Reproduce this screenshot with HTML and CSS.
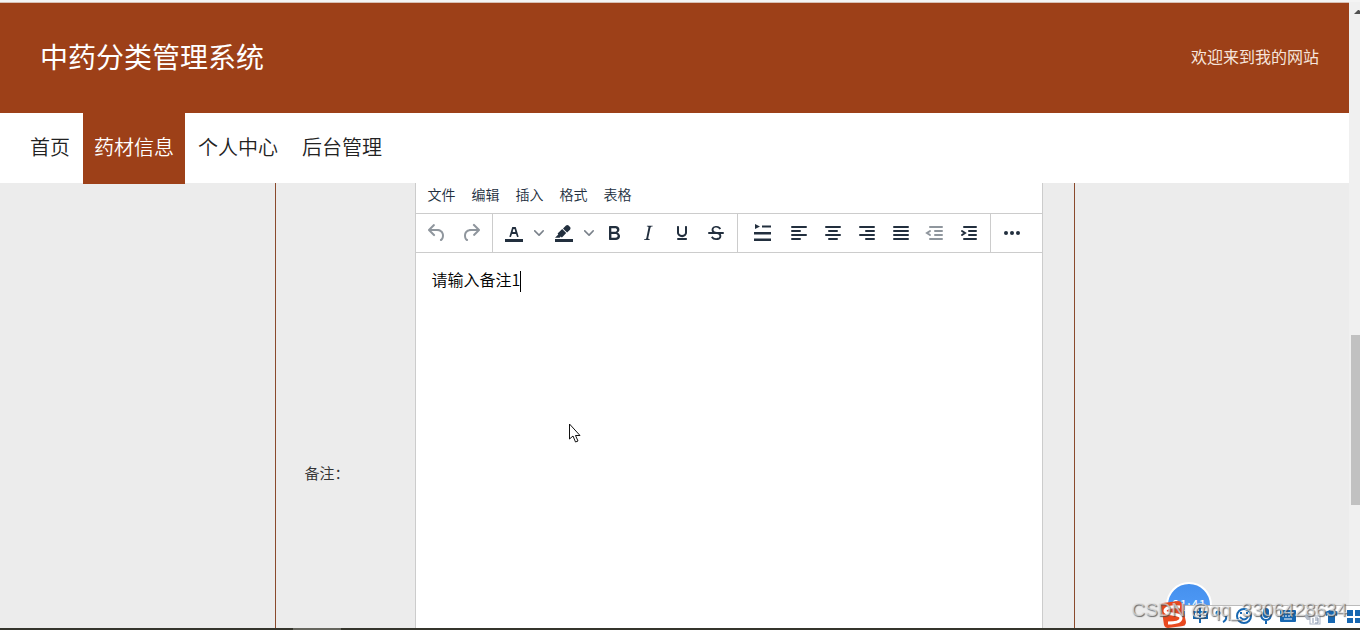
FILE: index.html
```html
<!DOCTYPE html>
<html lang="zh-CN">
<head>
<meta charset="utf-8">
<title>中药分类管理系统</title>
<link rel="stylesheet" href="styles.css">
</head>
<body>
<div class="screen">
  <div class="page">
    <header class="header">
      <h1 class="title">中药分类管理系统</h1>
      <span class="welcome">欢迎来到我的网站</span>
    </header>
    <nav class="nav">
      <a class="nav-link" href="#">首页</a>
      <a class="nav-link active" href="#">药材信息</a>
      <a class="nav-link" href="#">个人中心</a>
      <a class="nav-link" href="#">后台管理</a>
    </nav>
    <main class="content">
      <form class="form">
        <div class="form-row">
          <label class="form-label" for="remark">备注：</label>
          <div class="editor">
            <div class="menubar">
              <button type="button" class="menu">文件</button>
              <button type="button" class="menu">编辑</button>
              <button type="button" class="menu">插入</button>
              <button type="button" class="menu">格式</button>
              <button type="button" class="menu">表格</button>
            </div>
            <div class="toolbar">
              <div class="group">
                <button type="button" class="tool" aria-label="撤销" disabled><svg width="24" height="24"><path d="M6.4 8H12c3.7 0 6.2 2 6.8 5.1.6 2.7-.4 5.6-2.3 6.8a1 1 0 01-1-1.8c1.1-.6 1.8-2.7 1.4-4.6-.5-2.1-2.1-3.5-4.9-3.5H6.4l3.3 3.3a1 1 0 11-1.4 1.4l-5-5a1 1 0 010-1.4l5-5a1 1 0 011.4 1.4L6.4 8z"/></svg></button>
                <button type="button" class="tool" aria-label="重做" disabled><svg width="24" height="24"><path d="M17.6 10H12c-2.8 0-4.4 1.4-4.9 3.5-.4 2 .3 4 1.4 4.6a1 1 0 11-1 1.8c-2-1.2-2.9-4.1-2.3-6.8.6-3 3-5.1 6.8-5.1h5.6l-3.3-3.3a1 1 0 111.4-1.4l5 5a1 1 0 010 1.4l-5 5a1 1 0 01-1.4-1.4l3.3-3.3z"/></svg></button>
              </div>
              <div class="group">
                <button type="button" class="tool" aria-label="文字颜色"><svg width="24" height="24"><path d="M3 18h18v3H3zM8.7 16h-.8a.5.5 0 01-.5-.6l2.7-9c.1-.3.3-.4.5-.4h2.8c.2 0 .4.1.5.4l2.7 9a.5.5 0 01-.5.6h-.8a.5.5 0 01-.4-.4l-.7-2.2c0-.3-.3-.4-.5-.4h-3.4c-.2 0-.4.1-.5.4l-.7 2.2c0 .3-.2.4-.4.4zm2.6-7.6l-.6 2a.5.5 0 00.5.6h1.6a.5.5 0 00.5-.6l-.6-2c0-.3-.3-.4-.5-.4h-.4c-.2 0-.4.1-.5.4z" fill-rule="evenodd"/></svg></button>
                <button type="button" class="chevron" aria-label="选择文字颜色"><svg width="10" height="10"><path d="M8.7 2.2c.3-.3.8-.3 1 0 .4.4.4.9 0 1.2L5.7 7.8c-.3.3-.9.3-1.2 0L.2 3.4a.8.8 0 010-1.2c.3-.3.8-.3 1.1 0L5 6l3.7-3.8z"/></svg></button>
                <button type="button" class="tool" aria-label="背景颜色"><svg width="24" height="24"><path d="M3 18h18v3H3zM7.7 16.7H3l3.3-3.3-.7-.8L10.2 8l4 4.1-4 4.2c-.2.2-.6.2-.8 0l-.6-.7-1.1 1.1zm5-7.5L11 7.4l3-2.9a2 2 0 012.6 0L18 6c.7.7.7 2 0 2.7l-2.9 2.9-2.4-2.4z"/></svg></button>
                <button type="button" class="chevron" aria-label="选择背景颜色"><svg width="10" height="10"><path d="M8.7 2.2c.3-.3.8-.3 1 0 .4.4.4.9 0 1.2L5.7 7.8c-.3.3-.9.3-1.2 0L.2 3.4a.8.8 0 010-1.2c.3-.3.8-.3 1.1 0L5 6l3.7-3.8z"/></svg></button>
                <button type="button" class="tool" aria-label="粗体"><svg width="24" height="24"><path d="M7.8 19c-.3 0-.5 0-.6-.2l-.2-.5V5.7c0-.2 0-.4.2-.5l.6-.2h5c1.5 0 2.7.3 3.5 1 .7.6 1.1 1.4 1.1 2.5a3 3 0 01-.6 1.9c-.4.6-1 1-1.6 1.2.4.1.9.3 1.3.6s.8.7 1 1.2c.4.4.5 1 .5 1.6 0 1.3-.4 2.3-1.3 3-.8.7-2.1 1-3.8 1H7.8zm5-8.3c.6 0 1.2-.1 1.6-.5.4-.3.6-.7.6-1.3 0-1.1-.8-1.7-2.3-1.7H9.3v3.5h3.4zm.5 6c.7 0 1.3-.1 1.7-.4.4-.4.6-.9.6-1.5s-.2-1-.7-1.4c-.4-.3-1-.4-2-.4H9.4v3.8h4z" fill-rule="evenodd"/></svg></button>
                <button type="button" class="tool" aria-label="斜体"><svg width="24" height="24"><path d="M16.7 4.7l-.1.9h-.3c-.6 0-1 0-1.4.3-.3.3-.4.6-.5 1.1l-2.1 9.8v.6c0 .5.4.8 1.4.8h.2l-.2.8H8l.2-.8h.2c1.1 0 1.8-.5 2-1.5l2-9.8.1-.5c0-.6-.4-.8-1.4-.8h-.3l.2-.9h5.8z"/></svg></button>
                <button type="button" class="tool" aria-label="下划线"><svg width="24" height="24"><path d="M16 5c.6 0 1 .4 1 1v5.5a4 4 0 01-.4 1.8l-1 1.4a5.3 5.3 0 01-5.5 1 5 5 0 01-1.6-1c-.5-.4-.8-.9-1.1-1.4a4 4 0 01-.4-1.8V6c0-.6.4-1 1-1s1 .4 1 1v5.5c0 .3 0 .6.2 1l.6.7a3.3 3.3 0 002.2.8 3.4 3.4 0 002.2-.8c.3-.2.4-.5.6-.8l.2-.9V6c0-.6.4-1 1-1zM8 17h8c.6 0 1 .4 1 1s-.4 1-1 1H8a1 1 0 010-2z"/></svg></button>
                <button type="button" class="tool" aria-label="删除线"><svg width="24" height="24"><path d="M15.6 8.5c-.5-.7-1-1.1-1.3-1.3-.6-.4-1.3-.6-2-.6-2.7 0-2.8 1.7-2.8 2.1 0 1.6 1.8 2 3.2 2.3 4.4.9 4.6 2.8 4.6 3.9 0 1.4-.7 4.1-5 4.1A6.2 6.2 0 017 16.4l1.5-1.1c.4.6 1.6 2 3.7 2 1.6 0 2.5-.4 3-1.2.4-.8.3-2-.8-2.6-.7-.4-1.6-.7-2.9-1-1-.2-3.9-.8-3.9-3.6C7.6 6 10.3 5 12.4 5c2.9 0 4.2 1.6 4.7 2.4l-1.5 1.1z"/><path d="M5 11h14a1 1 0 010 2H5a1 1 0 010-2z"/></svg></button>
              </div>
              <div class="group">
                <button type="button" class="tool wide" aria-label="首行缩进"><svg width="24" height="24"><path d="M5 3l5 2.500-5 2.500zM12 4.500h9v2H12zM4 11h17v2.500H4zM4 17.500h17v2.500H4z"/></svg></button>
                <button type="button" class="tool" aria-label="左对齐"><svg width="24" height="24" class="lines"><path d="M5 6h14M5 10h8M5 14h14M5 18h8"/></svg></button>
                <button type="button" class="tool" aria-label="居中"><svg width="24" height="24" class="lines"><path d="M5 6h14M8 10h8M5 14h14M8 18h8"/></svg></button>
                <button type="button" class="tool" aria-label="右对齐"><svg width="24" height="24" class="lines"><path d="M5 6h14M11 10h8M5 14h14M11 18h8"/></svg></button>
                <button type="button" class="tool" aria-label="两端对齐"><svg width="24" height="24" class="lines"><path d="M5 6h14M5 10h14M5 14h14M5 18h14"/></svg></button>
                <button type="button" class="tool" aria-label="减少缩进" disabled><svg width="24" height="24" class="lines"><path d="M7 6h12M12 10h7M12 14h7M7 18h12M7 10l-3 2 3 2"/></svg></button>
                <button type="button" class="tool" aria-label="增加缩进"><svg width="24" height="24" class="lines"><path d="M7 6h12M12 10h7M12 14h7M7 18h12M5 10l3 2-3 2"/></svg></button>
              </div>
              <div class="group">
                <button type="button" class="tool" aria-label="更多"><svg width="24" height="24"><circle cx="6" cy="12" r="2"/><circle cx="12" cy="12" r="2"/><circle cx="18" cy="12" r="2"/></svg></button>
              </div>
            </div>
            <div class="edit-area" id="remark" role="textbox" aria-label="备注" contenteditable="true">请输入备注1<span class="caret"></span></div>
          </div>
        </div>
      </form>
    </main>
  </div>
  <div class="scrollbar">
    <svg class="scroll-arrow" width="9" height="5"><path d="M0 5l4-4h1l4 4z"/></svg>
    <div class="thumb"></div>
  </div>
</div>
<div class="taskbar"><span class="task"></span></div>

<svg class="cursor" width="13" height="20"><path d="M1.500 1v15l3.500-3 2.500 6 2.500-1-2.500-5.500h4.500z"/></svg>

<div class="recorder">01:41</div>
<div class="tray">
  <svg class="tray-icons" width="200" height="28" viewBox="1160 601 200 28">
    <path d="M1161 606q0-2 2-2l15-2q3 0 4 3l4 18q0 3-3 4l-15 2q-3 0-4-3z" fill="#e8491f"/>
    <path d="M1180 608c-9-1-15 1-15 4 0 4 16 2 16 7 0 4-7 5-13 5" fill="none" stroke="#fff" stroke-width="3"/>
    <g fill="none" stroke="#1767b1" stroke-width="2">
      <path d="M1194 613h13v6h-13zM1200 609v15"/>
      <circle cx="1218" cy="614" r="1.500"/>
      <path d="M1226 617q1 4-3 6"/>
      <circle cx="1244" cy="617" r="7"/>
      <path d="M1240 618q4 5 8 0M1241 613v2M1247 613v2"/>
      <path d="M1261 615q0 6 5 6t5-6M1266 621v4"/>
    </g>
    <rect x="1263" y="609" width="6" height="10" rx="3" fill="#1767b1"/>
    <rect x="1280" y="611" width="16" height="12" rx="1" fill="#1767b1"/>
    <path d="M1282 614h12M1282 617h12" stroke="#fff" stroke-width="1" stroke-dasharray="2 1"/>
    <path d="M1284 620h8" stroke="#fff"/>
    <path d="M1304 617q5-6 9 0v4h-6z" fill="#b5bdc9"/>
    <rect x="1310" y="617" width="10" height="8" fill="#fff" stroke="#aab4c5"/>
    <path d="M1313 619v5M1315 619h3v5h-3M1315 621h3" fill="none" stroke="#8795ad"/>
    <path d="M1325 613l5-2q2 2 4 0l4 2-1 4-2-1v8h-7v-8l-2 1z" fill="#1767b1"/>
    <path d="M1347 611h6v6h-6zM1355 611h6v6h-6zM1347 619h6v5h-6zM1355 619h6v5h-6z" fill="#1767b1"/>
  </svg>
</div>
<div class="watermark">CSDN @qq_3306428634</div>
</body>
</html>
```

FILE: styles.css
```css
* { box-sizing: border-box; }
body {
  margin: 0;
  height: 100vh;
  display: flex;
  flex-direction: column;
  overflow: hidden;
  position: relative;
  background: #ececec;
  color: #333;
  font-family: "Noto Sans CJK SC", sans-serif;
  font-weight: 350;
}
button { border: 0; padding: 0; background: none; font: inherit; color: inherit; }
.screen {
  flex: 1;
  min-height: 0;
  display: flex;
  border-top: 2px solid #f4f4f4;
}
.page {
  flex: 1;
  display: flex;
  flex-direction: column;
  border-top: 1px solid #d8c0b4;
}
.header {
  flex: none;
  height: 110px;
  padding: 0 30px 4px 40px;
  display: flex;
  align-items: center;
  justify-content: space-between;
  background: #9d4018;
  color: #fff;
}
.title { margin: 0; font-size: 28px; font-weight: 400; }
.welcome { font-size: 16px; color: #f6e4dc; font-weight: 400; }
.nav {
  flex: none;
  height: 70px;
  padding-left: 19px;
  display: flex;
  gap: 2px;
  background: #fff;
}
.nav-link {
  height: 71px;
  padding: 0 11px;
  line-height: 68px;
  font-size: 20px;
  color: #222;
  text-decoration: none;
}
.nav-link.active { background: #9d4018; color: #fff; }
.content { flex: 1; min-height: 0; overflow: hidden; }
.form {
  max-width: 800px;
  margin: 0 auto;
  padding: 0 31px 0 29px;
  border: solid #8a4a2c;
  border-width: 0 1px;
}
.form-row { display: flex; align-items: center; }
.form-label { width: 110px; padding-bottom: 2px; font-size: 15px; color: #333; }
.editor {
  flex: 1;
  min-height: 580px;
  background: #fff;
  border: solid #ccc;
  border-width: 0 1px;
}
.menubar { display: flex; height: 30px; padding: 0 4px; }
.menu { padding: 0 8px 8px; font-size: 14px; line-height: 22px; color: #222f3e; }
.toolbar {
  display: flex;
  height: 40px;
  border: solid #ccc;
  border-width: 1px 0;
}
.group { display: flex; align-items: center; padding: 0 4px; border-right: 1px solid #ccc; }
.group:last-child { border-right: 0; }
.tool, .chevron { display: flex; align-items: center; justify-content: center; height: 34px; }
.tool { width: 34px; }
.wide { width: 40px; }
.chevron { width: 16px; }
.tool svg { fill: #222f3e; }
.tool .lines { fill: none; stroke: #222f3e; stroke-width: 2; stroke-linecap: round; }
.tool:disabled { opacity: 0.5; }
.chevron svg { fill: #222f3e; opacity: 0.6; }
.edit-area { padding: 14px 16px; font-size: 16px; line-height: 24px; color: #000; outline: 0; }
.caret { display: inline-block; width: 1px; height: 21px; background: #000; vertical-align: middle; }
.scrollbar { width: 11px; padding-left: 2px; background: #f0f0f0; overflow: hidden; }
.scroll-arrow { display: block; margin: 7px 0 0 3px; fill: #505050; }
.thumb { height: 170px; margin-top: 321px; background: #c1c1c1; }
.taskbar { flex: none; height: 2px; padding-left: 293px; background: #35352c; }
.task { display: block; width: 48px; height: 2px; background: #66665e; }
.cursor { position: absolute; left: 568px; top: 423px; fill: #fff; stroke: #111; }
.recorder {
  position: absolute;
  right: 148px;
  bottom: 2px;
  width: 46px;
  height: 46px;
  border: 2px solid #fff;
  border-radius: 50%;
  background: linear-gradient(#4590ee, #55a0fb);
  color: #fff;
  font-size: 14px;
  line-height: 42px;
  text-align: center;
}
.tray {
  position: absolute;
  right: 0;
  bottom: 2px;
  height: 23px;
  width: 175px;
  display: flex;
  justify-content: flex-end;
  align-items: flex-end;
  border-top: 1px solid #bbb;
  background: #fff;
}
.tray-icons { flex: none; }
.watermark {
  position: absolute;
  right: 13px;
  bottom: 9px;
  font: 400 19px/22px "Liberation Sans", sans-serif;
  color: rgba(225, 225, 225, 0.7);
  text-shadow: 1px 1px 1px rgba(70, 70, 70, 0.8);
}
```
